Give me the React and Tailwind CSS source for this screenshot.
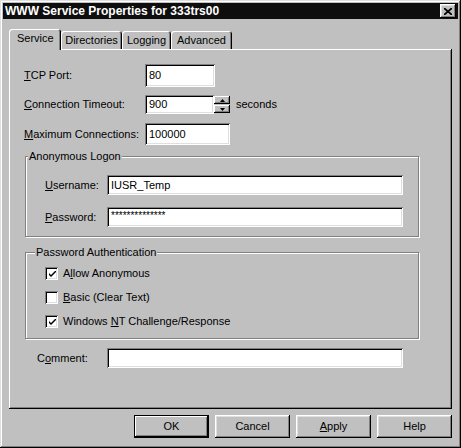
import React from "react";

// classic win32 bevels
const raised =
  "shadow-[inset_-1px_-1px_0_#000,inset_1px_1px_0_#fff,inset_-2px_-2px_0_#808080]";
const sunken =
  "shadow-[inset_1px_1px_0_#808080,inset_-1px_-1px_0_#fff,inset_2px_2px_0_#000,inset_-2px_-2px_0_#dfdfdf]";

function Field({ className, children }) {
  return (
    <div className={`flex items-center bg-white pl-[4px] ${sunken} ${className}`}>
      {children}
    </div>
  );
}

function Checkbox({ checked, children }) {
  return (
    <div className="flex h-[13px] items-center">
      <div className={`flex h-[13px] w-[13px] items-center justify-center bg-white ${sunken}`}>
        {checked && (
          <svg width="7" height="7" viewBox="0 0 7 7" className="ml-[1px] mt-[1px]">
            <path d="M0 2 L0 4 L2 6 L7 1 L7 -1 L2 4 Z" fill="#000" />
          </svg>
        )}
      </div>
      <span className="ml-[5px]">{children}</span>
    </div>
  );
}

function GroupBox({ title, titleLeft, className, children }) {
  return (
    <div
      className={`relative border border-[#808080] shadow-[inset_1px_1px_0_#fff,1px_1px_0_#fff] ${className}`}
    >
      <span className={`absolute top-[-7px] bg-[#c0c0c0] px-[1px] leading-[13px] ${titleLeft}`}>
        {title}
      </span>
      {children}
    </div>
  );
}

function Button({ children, isDefault }) {
  if (isDefault) {
    return (
      <div className="h-[23px] w-[75px] border border-black">
        <div className={`flex h-full w-full items-center justify-center ${raised}`}>
          {children}
        </div>
      </div>
    );
  }
  return (
    <div
      className={`flex h-[23px] w-[75px] items-center justify-center shadow-[inset_-1px_-1px_0_#000,inset_1px_1px_0_#fff,inset_-2px_-2px_0_#808080,inset_2px_2px_0_#dfdfdf]`}
    >
      {children}
    </div>
  );
}

function Tab({ label, active, width }) {
  if (active) {
    return (
      <div
        className={`relative z-10 -mb-px h-[21px] rounded-t-[3px] bg-[#c0c0c0] pl-[8px] pt-[3px] leading-[13px] shadow-[inset_1px_1px_0_#fff,inset_-1px_0_0_#000,inset_-2px_0_0_#808080] ${width}`}
      >
        {label}
      </div>
    );
  }
  return (
    <div
      className={`flex h-[18px] justify-center rounded-t-[3px] pt-[3px] leading-[13px] shadow-[inset_1px_1px_0_#fff,inset_-1px_0_0_#000,inset_-2px_0_0_#808080] ${width}`}
    >
      {label}
    </div>
  );
}

export default function App() {
  return (
    <div className="h-[448px] w-[461px] bg-[#c0c0c0] p-[3px] font-['Liberation_Sans',Arial,sans-serif] text-[11px] text-black shadow-[inset_-1px_-1px_0_#000,inset_1px_1px_0_#dfdfdf,inset_-2px_-2px_0_#808080,inset_2px_2px_0_#fff]">
      {/* title bar */}
      <div className="flex h-[16px] items-center justify-between bg-[#0e0e0e] px-[2px]">
        <span className="text-[12px] font-bold leading-none text-white">
          WWW Service Properties for 333trs00
        </span>
        <div
          className={`flex h-[14px] w-[16px] items-center justify-center bg-[#c0c0c0] shadow-[inset_-1px_-1px_0_#000,inset_1px_1px_0_#fff,inset_-2px_-2px_0_#808080,inset_2px_2px_0_#dfdfdf]`}
        >
          <svg width="8" height="7" viewBox="0 0 8 7">
            <path d="M0 0 L8 7 M8 0 L0 7" stroke="#000" strokeWidth="1.7" />
          </svg>
        </div>
      </div>

      <div className="px-[6px]">
        {/* tabs */}
        <div className="mt-[10px] flex h-[20px] items-end">
          <Tab label="Service" active width="w-[52px]" />
          <Tab label="Directories" width="w-[61px]" />
          <Tab label="Logging" width="w-[49px]" />
          <Tab label="Advanced" width="w-[61px]" />
        </div>

        {/* panel */}
        <div className={`h-[360px] w-full pl-[15px] pt-[15px] ${raised}`}>
          <div className="flex h-[23px] items-center">
            <span className="w-[121px]">
              <u>T</u>CP Port:
            </span>
            <Field className="h-[23px] w-[70px]">80</Field>
          </div>

          <div className="mt-[8px] flex h-[19px] items-center">
            <span className="w-[121px]">
              <u>C</u>onnection Timeout:
            </span>
            <Field className="h-[19px] w-[69px]">900</Field>
            <div className="flex h-[17px] w-[16px] flex-col">
              <div className={`flex h-[8px] items-center justify-center ${raised}`}>
                <svg width="5" height="3" viewBox="0 0 5 3">
                  <path d="M2.5 0 L5 3 L0 3 Z" fill="#000" />
                </svg>
              </div>
              <div className={`mt-[1px] flex h-[8px] items-center justify-center ${raised}`}>
                <svg width="5" height="3" viewBox="0 0 5 3">
                  <path d="M0 0 L5 0 L2.5 3 Z" fill="#000" />
                </svg>
              </div>
            </div>
            <span className="ml-[6px]">seconds</span>
          </div>

          <div className="mt-[9px] flex h-[22px] items-center">
            <span className="w-[121px]">
              <u>M</u>aximum Connections:
            </span>
            <Field className="h-[22px] w-[85px]">100000</Field>
          </div>

          <GroupBox
            title="Anonymous Logon"
            titleLeft="left-[2px]"
            className="ml-[1px] mt-[11px] h-[81px] w-[394px] pl-[19px] pt-[18px]"
          >
            <div className="flex h-[20px] items-center">
              <span className="w-[62px]">
                <u>U</u>sername:
              </span>
              <Field className="h-[20px] w-[296px]">IUSR_Temp</Field>
            </div>
            <div className="mt-[12px] flex h-[20px] items-center">
              <span className="w-[62px]">
                <u>P</u>assword:
              </span>
              <Field className="h-[20px] w-[296px] text-[10px]">
                <span className="-mt-[3px]">**************</span>
              </Field>
            </div>
          </GroupBox>

          <GroupBox
            title="Password Authentication"
            titleLeft="left-[9px]"
            className="ml-[1px] mt-[15px] flex h-[87px] w-[394px] flex-col gap-[11px] pl-[19px] pt-[14px]"
          >
            <Checkbox checked>
              A<u>l</u>low Anonymous
            </Checkbox>
            <Checkbox>
              <u>B</u>asic (Clear Text)
            </Checkbox>
            <Checkbox checked>
              Windows <u>N</u>T Challenge/Response
            </Checkbox>
          </GroupBox>

          <div className="mt-[9px] flex h-[20px] items-center">
            <span className="w-[83px] pl-[13px]">
              C<u>o</u>mment:
            </span>
            <Field className="h-[20px] w-[296px]" />
          </div>
        </div>

        {/* buttons */}
        <div className="mt-[6px] flex justify-end gap-[6px]">
          <Button isDefault>OK</Button>
          <Button>Cancel</Button>
          <Button>
            <u>A</u>pply
          </Button>
          <Button>Help</Button>
        </div>
      </div>
    </div>
  );
}
